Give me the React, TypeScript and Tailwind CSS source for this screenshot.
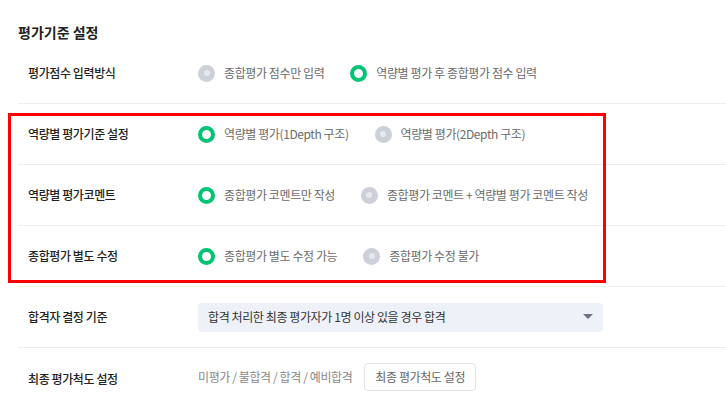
import React from "react";

function Radio({ checked, label }: { checked: boolean; label: string }) {
  return (
    <div className="flex items-center gap-[9px]">
      {checked ? (
        <span className="w-[17px] h-[17px] rounded-full border-[4px] border-[#00c473] bg-white shrink-0" />
      ) : (
        <span className="w-[17px] h-[17px] rounded-full bg-[#cdd0d8] flex items-center justify-center shrink-0">
          <span className="w-[6px] h-[6px] rounded-full bg-[#e6e8ed]" />
        </span>
      )}
      <span className="text-[12px] tracking-[-0.4px] text-[#6b6b6b] whitespace-nowrap">{label}</span>
    </div>
  );
}

function Row({ label, children, last }: { label: string; children: React.ReactNode; last?: boolean }) {
  return (
    <div className={`flex items-center h-[61px] pl-[10px] ${last ? "" : "border-b border-[#efefef]"}`}>
      <div className="w-[170px] shrink-0 text-[12px] tracking-[-0.4px] font-medium text-[#222]">{label}</div>
      <div className="flex items-center gap-[26px] flex-1">{children}</div>
    </div>
  );
}

export default function App() {
  return (
    <div
      className="relative w-[726px] h-[418px] bg-white overflow-hidden pl-[18px]"
      style={{ fontFamily: '"Noto Sans CJK KR", "Noto Sans", sans-serif' }}
    >
      <div className="pt-[21px] leading-[22px] text-[14px] font-bold text-[#222]">평가기준 설정</div>
      <div>
        <Row label="평가점수 입력방식">
          <Radio checked={false} label="종합평가 점수만 입력" />
          <Radio checked label="역량별 평가 후 종합평가 점수 입력" />
        </Row>
        <Row label="역량별 평가기준 설정">
          <Radio checked label="역량별 평가(1Depth 구조)" />
          <Radio checked={false} label="역량별 평가(2Depth 구조)" />
        </Row>
        <Row label="역량별 평가코멘트">
          <Radio checked label="종합평가 코멘트만 작성" />
          <Radio checked={false} label="종합평가 코멘트 + 역량별 평가 코멘트 작성" />
        </Row>
        <Row label="종합평가 별도 수정">
          <Radio checked label="종합평가 별도 수정 가능" />
          <Radio checked={false} label="종합평가 수정 불가" />
        </Row>
        <Row label="합격자 결정 기준">
          <div className="w-[405px] h-[29px] rounded-[4px] bg-[#eef1f8] flex items-center justify-between pl-[10px] pr-[10px]">
            <span className="text-[12px] tracking-[-0.4px] text-[#333]">합격 처리한 최종 평가자가 1명 이상 있을 경우 합격</span>
            <svg width="10" height="6" viewBox="0 0 10 6">
              <path d="M0 0 L10 0 L5 5 Z" fill="#6b7280" />
            </svg>
          </div>
        </Row>
        <Row label="최종 평가척도 설정" last>
          <div className="flex items-center gap-[12px] -mt-[3px]">
            <span className="text-[12px] tracking-[-0.4px] text-[#888]">미평가 / 불합격 / 합격 / 예비합격</span>
            <button className="h-[28px] px-[10px] rounded-[4px] border border-[#dfe2e8] bg-white text-[12px] tracking-[-0.4px] text-[#666]">
              최종 평가척도 설정
            </button>
          </div>
        </Row>
      </div>
      <div className="absolute left-[8px] top-[113px] w-[598px] h-[170px] border-[3px] border-[#ff0000] pointer-events-none" />
    </div>
  );
}
